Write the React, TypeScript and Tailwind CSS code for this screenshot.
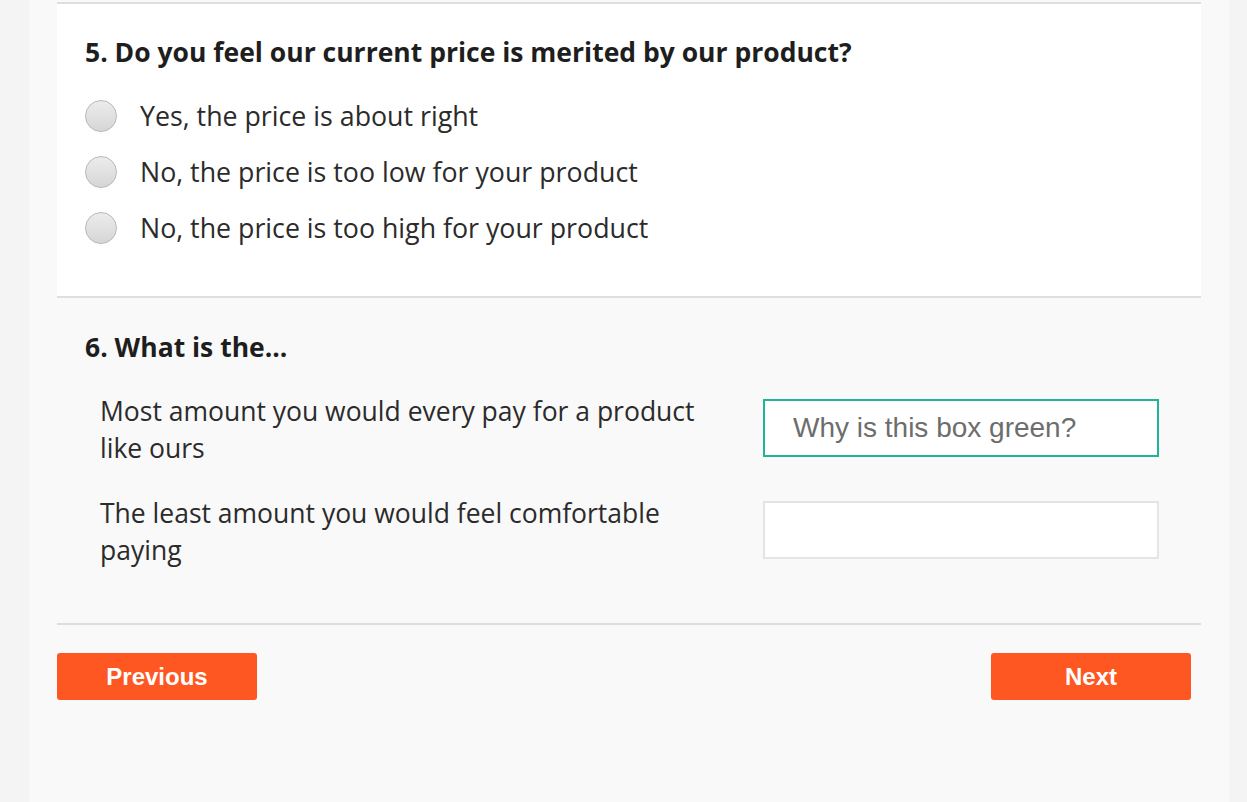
const font = { fontFamily: '"Open Sans", "Noto Sans", sans-serif' };
const arial = { fontFamily: '"Liberation Sans", Arial, sans-serif' };

function Radio({ label }: { label: string }) {
  return (
    <label className="flex items-center h-[56px] cursor-pointer">
      <span className="w-[32px] h-[32px] rounded-full border border-[#b9b9b9] bg-gradient-to-b from-[#ececec] to-[#d6d6d6] shrink-0" />
      <span className="ml-[23px] text-[26.75px] text-[#2b2b2b]">{label}</span>
    </label>
  );
}

function Row({ label, placeholder, active }: { label: string; placeholder?: string; active?: boolean }) {
  return (
    <div className="flex items-start justify-between h-[58px] pl-[43px] pr-[42px]">
      <p className="w-[620px] h-[58px] text-[26.5px] leading-[37px] text-[#2b2b2b] -mt-[6px]">{label}</p>
      <input
        placeholder={placeholder}
        className={
          "w-[396px] h-[58px] bg-white border-2 px-[28px] text-[28px] text-[#333] placeholder:text-[#6d6d6d] outline-none " +
          (active ? "border-[#1fb397]" : "border-[#e4e4e4]")
        }
        style={arial}
      />
    </div>
  );
}

export default function App() {
  return (
    <main className="w-[1247px] h-[802px] bg-[#f4f4f4] overflow-hidden" style={font}>
      <div className="ml-[29px] w-[1200px] h-full bg-[#f9f9f9] px-[28px] pt-[2px]">
        <section className="bg-white border-t-2 border-b-2 border-[#dedede] pl-[28px] pt-[28px] pb-[40px]">
          <h2 className="text-[26.5px] font-bold text-[#1e1e1e] leading-[40px]">
            5. Do you feel our current price is merited by our product?
          </h2>
          <div className="mt-[16px]">
            <Radio label="Yes, the price is about right" />
            <Radio label="No, the price is too low for your product" />
            <Radio label="No, the price is too high for your product" />
          </div>
        </section>

        <section className="border-b-2 border-[#dedede] pt-[29px] pb-[64px]">
          <h2 className="pl-[28px] text-[26.5px] font-bold text-[#1e1e1e] leading-[40px]">6. What is the...</h2>
          <div className="mt-[32px] flex flex-col gap-[44px]">
            <Row label="Most amount you would every pay for a product like ours" placeholder="Why is this box green?" active />
            <Row label="The least amount you would feel comfortable paying" />
          </div>
        </section>

        <div className="flex justify-between pt-[28px] pr-[10px]">
          <button className="w-[200px] h-[47px] rounded-[3px] bg-[#ff5722] text-white text-[24px] font-bold" style={arial}>
            Previous
          </button>
          <button className="w-[200px] h-[47px] rounded-[3px] bg-[#ff5722] text-white text-[24px] font-bold" style={arial}>
            Next
          </button>
        </div>
      </div>
    </main>
  );
}
